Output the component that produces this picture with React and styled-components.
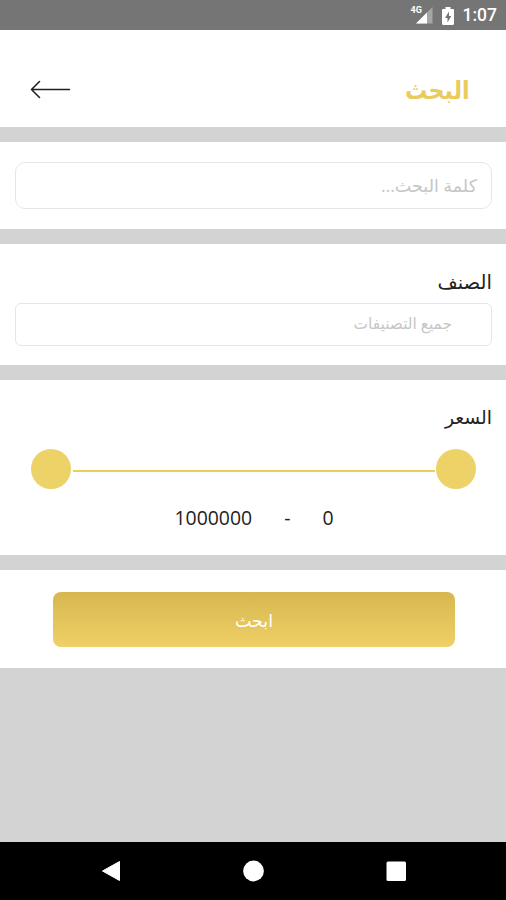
import React from "react";
import styled, { createGlobalStyle } from "styled-components";

const App = () => {
  return (
    <Screen>
      <GlobalStyle />
      <StatusBar>
        <SignalIcon />
        <BatteryIcon />
        <Clock>1:07</Clock>
      </StatusBar>
      <Header>
        <Title>البحث</Title>
        <BackButton aria-label="رجوع">
          <svg width="42" height="20" viewBox="0 0 42 20" fill="none">
            <path
              d="M39.500 9.500H2M9.500 1.500L1.500 9.500l8 8"
              stroke="#222"
              strokeWidth="1.6"
              strokeLinecap="round"
              strokeLinejoin="round"
            />
          </svg>
        </BackButton>
      </Header>
      <Section $height={87} $top={20}>
        <Field $height={47} $radius={10} $inset={14}>
          <Placeholder $size={17.5}>كلمة البحث...</Placeholder>
        </Field>
      </Section>
      <Section $height={121} $top={22}>
        <Label $size={19.6}>الصنف</Label>
        <Field $height={43} $radius={6} $inset={39}>
          <Placeholder $size={15.4}>جميع التصنيفات</Placeholder>
        </Field>
      </Section>
      <Section $height={175} $top={22}>
        <Label $size={18.8}>السعر</Label>
        <Slider>
          <Thumb />
          <Track />
          <Thumb />
        </Slider>
        <Range>
          <span>0</span>
          <span>-</span>
          <span>1000000</span>
        </Range>
      </Section>
      <Section $height={98} $top={22}>
        <SubmitButton>
          <ButtonText>ابحث</ButtonText>
        </SubmitButton>
      </Section>
      <NavBar>
        <svg width="20" height="22" viewBox="0 0 20 22">
          <path d="M18.5 1.5v19L1.5 11z" fill="#fff" stroke="#fff" strokeLinejoin="round" />
        </svg>
        <svg width="22" height="22" viewBox="0 0 22 22">
          <circle cx="10.5" cy="11" r="10.4" fill="#fff" />
        </svg>
        <svg width="20" height="20" viewBox="0 0 20 20">
          <rect x="0.5" y="0.5" width="19.5" height="19.5" rx="1.5" fill="#fff" />
        </svg>
      </NavBar>
    </Screen>
  );
};

export default App;

const SignalIcon = () => (
  <Signal>
    <NetworkType>4G</NetworkType>
    <svg width="18" height="17" viewBox="0 0 18 17">
      <path d="M17.5 0v16.5H1z" fill="#a6a6a6" />
      <path d="M12 5.5v11H1z" fill="#fff" />
    </svg>
  </Signal>
);

const BatteryIcon = () => (
  <svg width="12" height="18" viewBox="0 0 12 18">
    <path
      d="M3.5 0h5v2h2.3c.7 0 1.2.5 1.2 1.200v13.600c0 .7-.5 1.200-1.200 1.200H1.200C.5 18 0 17.500 0 16.800V3.200C0 2.500.5 2 1.200 2h2.300z"
      fill="#fff"
    />
    <path d="M7 4.500L3 11h2.500v4.500L9.300 9H7z" fill="#757575" />
  </svg>
);

const GlobalStyle = createGlobalStyle`
  body {
    margin: 0;
    background: #d3d3d3;
  }
  * {
    box-sizing: border-box;
  }
`;
const Screen = styled.div`
  direction: rtl;
  display: flex;
  flex-direction: column;
  gap: 15px;
  width: 506px;
  height: 900px;
  background: #d3d3d3;
  font-family: "Open Sans", "DejaVu Sans", sans-serif;
`;
const StatusBar = styled.div`
  direction: ltr;
  display: flex;
  flex: none;
  align-items: center;
  justify-content: flex-end;
  height: 30px;
  margin-bottom: -15px;
  padding: 1px 9px 0 0;
  background: #757575;
`;
const Signal = styled.div`
  position: relative;
  display: flex;
  margin-right: 9px;
`;
const NetworkType = styled.span`
  position: absolute;
  top: -2px;
  left: -4px;
  color: #fff;
  font: bold 9px/10px Roboto, sans-serif;
`;
const Clock = styled.span`
  margin-left: 9px;
  color: #fff;
  font: 500 17.5px/29px Roboto, sans-serif;
`;
const Header = styled.header`
  display: flex;
  flex: none;
  align-items: center;
  justify-content: space-between;
  height: 97px;
  padding: 22px 36px 0 30px;
  background: #fff;
`;
const Title = styled.h1`
  margin: -2px 0 0;
  color: #e9cc5c;
  font-size: 25px;
  font-weight: 700;
  line-height: 40px;
  transform: scaleX(0.89);
  transform-origin: right center;
`;
const BackButton = styled.button`
  display: flex;
  padding: 0;
  border: 0;
  background: none;
`;
const Section = styled.section`
  display: flex;
  flex: none;
  flex-direction: column;
  height: ${(p) => p.$height}px;
  padding: ${(p) => p.$top}px 14px 0;
  background: #fff;
`;
const Field = styled.div`
  display: flex;
  flex: none;
  align-items: center;
  height: ${(p) => p.$height}px;
  margin-left: 1px;
  padding: 0 ${(p) => p.$inset}px 2px;
  border: 1px solid #e6e6e6;
  border-radius: ${(p) => p.$radius}px;
`;
const Placeholder = styled.span`
  color: #c6c6c6;
  font-size: ${(p) => p.$size}px;
  line-height: 30px;
`;
const Label = styled.label`
  height: 37px;
  color: #222;
  font-size: ${(p) => p.$size}px;
  line-height: 31px;
`;
const Slider = styled.div`
  display: flex;
  align-items: center;
  justify-content: space-between;
  height: 40px;
  margin-top: 10px;
  padding: 0 16px 0 17px;
`;
const Thumb = styled.div`
  width: 40px;
  height: 40px;
  border-radius: 50%;
  background: #edd267;
`;
const Track = styled.div`
  width: 362px;
  height: 2px;
  margin-top: 3px;
  background: #e9cf5c;
`;
const Range = styled.div`
  display: flex;
  justify-content: center;
  gap: 32px;
  margin-top: 14px;
  padding-left: 2px;
  color: #222;
  font-size: 19.4px;
  line-height: 30px;
`;
const SubmitButton = styled.button`
  width: 402px;
  height: 55px;
  margin: 0 37px;
  padding: 0;
  border: 0;
  border-radius: 8px;
  background: linear-gradient(#d7b650, #efd166);
  color: #fff;
  font-family: inherit;
`;
const ButtonText = styled.span`
  font-size: 17.5px;
  line-height: 30px;
`;
const NavBar = styled.nav`
  direction: ltr;
  display: flex;
  flex: none;
  align-items: center;
  justify-content: space-between;
  height: 58px;
  margin-top: auto;
  padding: 0 100px 0 101px;
  background: #000;
`;
